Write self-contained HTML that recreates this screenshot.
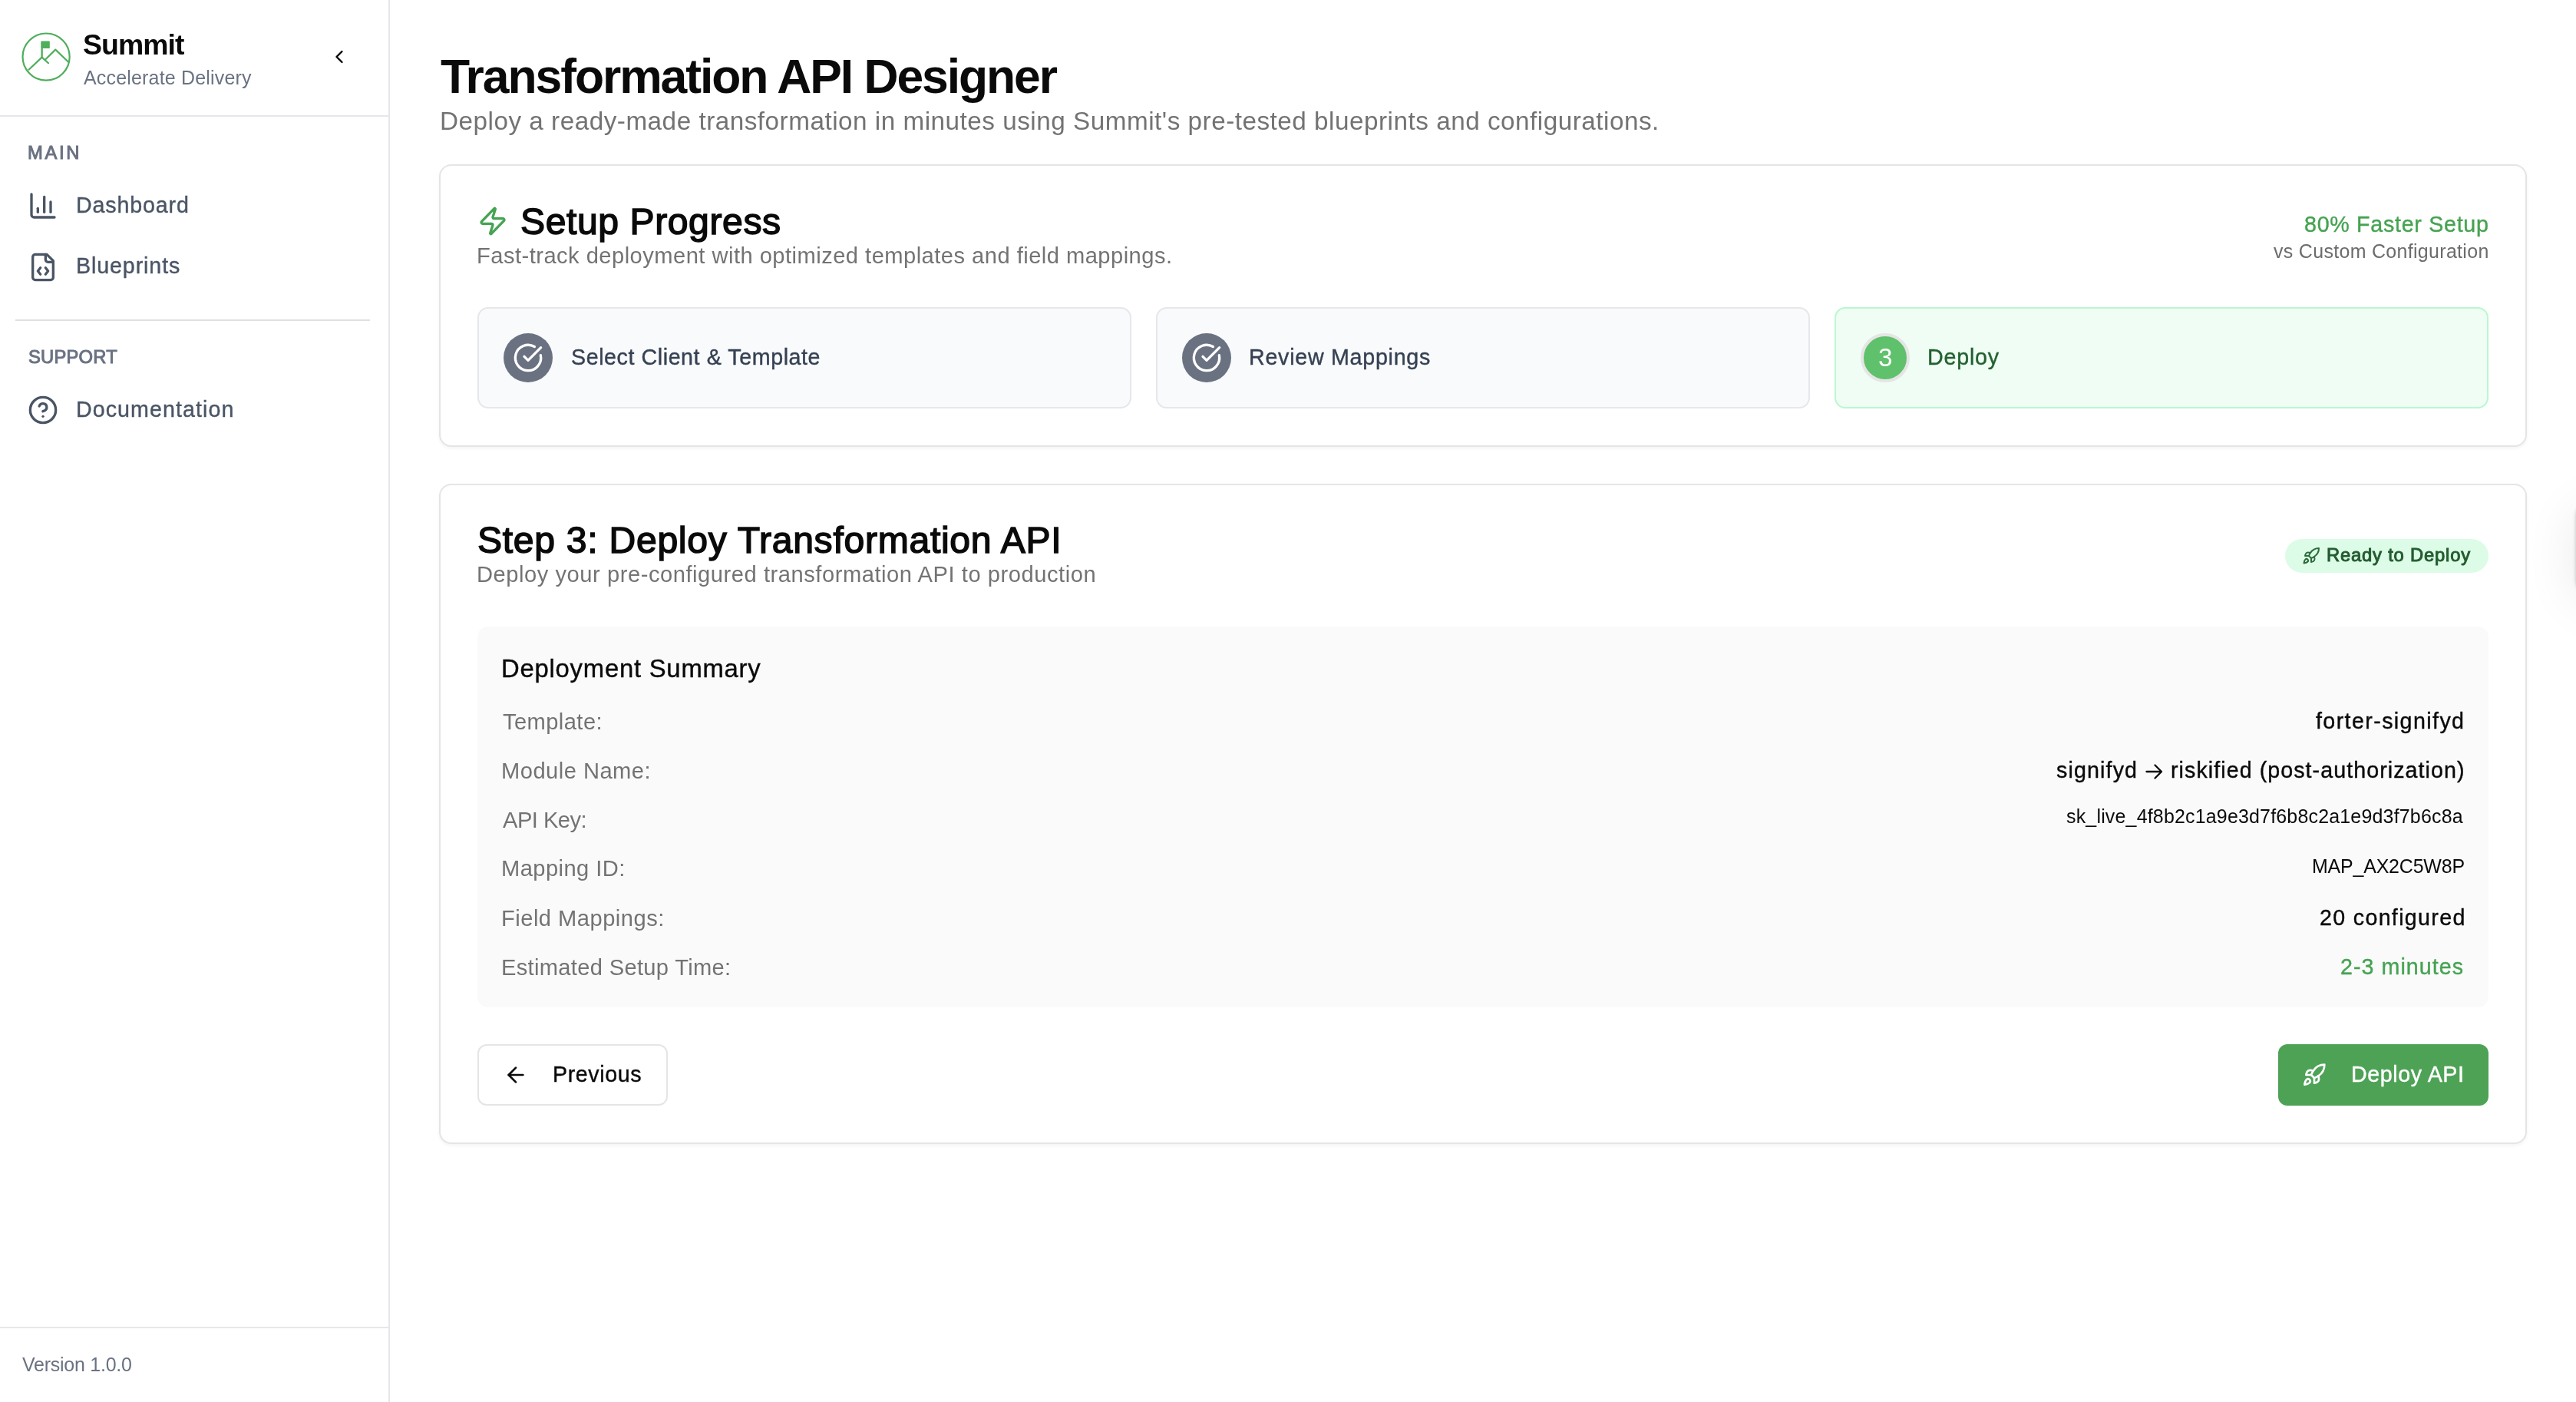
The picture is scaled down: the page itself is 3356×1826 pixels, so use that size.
<!DOCTYPE html>
<html><head><meta charset="utf-8"><title>Transformation API Designer</title>
<style>
html,body{margin:0;padding:0;width:3356px;height:1826px;overflow:hidden;background:#ffffff;font-family:"Liberation Sans",sans-serif;}
.a{position:absolute;box-sizing:border-box;}
.t{position:absolute;white-space:nowrap;font-family:"Liberation Sans",sans-serif;will-change:transform;}
svg.i{position:absolute;overflow:visible;fill:none;stroke-linecap:round;stroke-linejoin:round;}
</style></head><body>
<!-- ===== Sidebar ===== -->
<div class="a" style="left:0;top:0;width:508px;height:1826px;background:#ffffff;border-right:2px solid #e5e7eb"></div>
<div class="a" style="left:0;top:150px;width:506px;height:2px;background:#e5e7eb"></div>
<div class="a" style="left:20px;top:416px;width:462px;height:2px;background:#e0e0e0"></div>
<div class="a" style="left:0;top:1728px;width:506px;height:2px;background:#e5e7eb"></div>
<!-- logo -->
<svg class="i" style="left:0;top:0" width="120" height="140" viewBox="0 0 120 140" stroke="#4fae5b" stroke-width="2.2">
  <circle cx="60.1" cy="74.1" r="30.6"/>
  <path d="M37 91.2 L54.6 74.6" stroke-linecap="butt"/><path d="M54.6 74.6 L63 82.2" stroke-linecap="round"/>
  <path d="M59.6 77 L72.2 64.6 L89.4 81"/>
  <path d="M54.6 74.6 V54" stroke-width="2.4" stroke-linecap="butt"/>
  <rect x="53.6" y="53.4" width="11.2" height="9.6" fill="#4fae5b" stroke="none" rx="0.6"/>
</svg>
<!-- collapse chevron -->
<svg class="i" style="left:428px;top:60px" width="28" height="28" viewBox="0 0 24 24" stroke="#0a0a0a" stroke-width="2.1"><path d="m15 18-6-6 6-6"/></svg>
<!-- nav icons -->
<svg class="i" style="left:36px;top:248px" width="40" height="40" viewBox="0 0 24 24" stroke="#4a5565" stroke-width="2"><path d="M3 3v16a2 2 0 0 0 2 2h16"/><path d="M18 17V9"/><path d="M13 17V5"/><path d="M8 17v-3"/></svg>
<svg class="i" style="left:36px;top:328px" width="40" height="40" viewBox="0 0 24 24" stroke="#4a5565" stroke-width="2"><path d="M10 12.5 8 15l2 2.5"/><path d="m14 12.5 2 2.5-2 2.5"/><path d="M14 2v4a2 2 0 0 0 2 2h4"/><path d="M15 2H6a2 2 0 0 0-2 2v16a2 2 0 0 0 2 2h12a2 2 0 0 0 2-2V7z"/></svg>
<svg class="i" style="left:36px;top:514px" width="40" height="40" viewBox="0 0 24 24" stroke="#4a5565" stroke-width="2"><circle cx="12" cy="12" r="10"/><path d="M9.09 9a3 3 0 0 1 5.83 1c0 2-3 3-3 3"/><path d="M12 17h.01"/></svg>

<!-- ===== Card 1: Setup Progress ===== -->
<div class="a" style="left:572px;top:214px;width:2720px;height:368px;border:2px solid #e5e5e5;border-radius:16px;background:#fff;box-shadow:0 2px 4px rgba(0,0,0,0.05)"></div>
<svg class="i" style="left:622px;top:268px" width="40" height="40" viewBox="0 0 24 24" stroke="#46a352" stroke-width="2"><path d="M4 14a1 1 0 0 1-.78-1.63l9.9-10.2a.5.5 0 0 1 .86.46l-1.92 6.02A1 1 0 0 0 13 10h7a1 1 0 0 1 .78 1.63l-9.9 10.2a.5.5 0 0 1-.86-.46l1.92-6.02A1 1 0 0 0 11 14z"/></svg>
<!-- tiles -->
<div class="a" style="left:622px;top:400px;width:852px;height:132px;border:2px solid #e5e7eb;border-radius:14px;background:#f9fafb"></div>
<div class="a" style="left:1506px;top:400px;width:852px;height:132px;border:2px solid #e5e7eb;border-radius:14px;background:#f9fafb"></div>
<div class="a" style="left:2390px;top:400px;width:852px;height:132px;border:2px solid #b9f8cf;border-radius:14px;background:#f0fdf4"></div>
<div class="a" style="left:656px;top:434px;width:64px;height:64px;border-radius:50%;background:#6a7282"></div>
<svg class="i" style="left:668px;top:446px" width="40" height="40" viewBox="0 0 24 24" stroke="#ffffff" stroke-width="2"><path d="M21.801 10A10 10 0 1 1 17 3.335"/><path d="m9 11 3 3L22 4"/></svg>
<div class="a" style="left:1540px;top:434px;width:64px;height:64px;border-radius:50%;background:#6a7282"></div>
<svg class="i" style="left:1552px;top:446px" width="40" height="40" viewBox="0 0 24 24" stroke="#ffffff" stroke-width="2"><path d="M21.801 10A10 10 0 1 1 17 3.335"/><path d="m9 11 3 3L22 4"/></svg>
<div class="a" style="left:2424px;top:434px;width:64px;height:64px;border-radius:50%;background:#5fc16b;border:4px solid #e5e5e5"></div>

<!-- ===== Card 2: Step 3 ===== -->
<div class="a" style="left:572px;top:630px;width:2720px;height:860px;border:2px solid #e5e5e5;border-radius:16px;background:#fff;box-shadow:0 2px 4px rgba(0,0,0,0.05)"></div>
<div class="a" style="left:2977px;top:702px;width:265px;height:44px;border-radius:22px;background:#dcfce7"></div>
<svg class="i" style="left:2999px;top:712px" width="24" height="24" viewBox="0 0 24 24" stroke="#2b6b3a" stroke-width="2"><path d="M4.5 16.5c-1.5 1.26-2 5-2 5s3.74-.5 5-2c.71-.84.7-2.13-.09-2.91a2.18 2.18 0 0 0-2.91-.09z"/><path d="m12 15-3-3a22 22 0 0 1 2-3.95A12.88 12.88 0 0 1 22 2c0 2.72-.78 7.5-6 11a22.35 22.35 0 0 1-4 2z"/><path d="M9 12H4s.55-3.03 2-4c1.62-1.08 5 0 5 0"/><path d="M12 15v5s3.03-.55 4-2c1.08-1.62 0-5 0-5"/></svg>
<div class="a" style="left:622px;top:816px;width:2620px;height:496px;border-radius:14px;background:#fafafa"></div>
<!-- buttons -->
<div class="a" style="left:622px;top:1360px;width:248px;height:80px;border:2px solid #e5e5e5;border-radius:12px;background:#fff"></div>
<svg class="i" style="left:656px;top:1384px" width="32" height="32" viewBox="0 0 24 24" stroke="#0a0a0a" stroke-width="2"><path d="m12 19-7-7 7-7"/><path d="M19 12H5"/></svg>
<div class="a" style="left:2968px;top:1360px;width:274px;height:80px;border-radius:12px;background:#4ea255"></div>
<svg class="i" style="left:2999px;top:1384px" width="32" height="32" viewBox="0 0 24 24" stroke="#ffffff" stroke-width="2"><path d="M4.5 16.5c-1.5 1.26-2 5-2 5s3.74-.5 5-2c.71-.84.7-2.13-.09-2.91a2.18 2.18 0 0 0-2.91-.09z"/><path d="m12 15-3-3a22 22 0 0 1 2-3.95A12.88 12.88 0 0 1 22 2c0 2.72-.78 7.5-6 11a22.35 22.35 0 0 1-4 2z"/><path d="M9 12H4s.55-3.03 2-4c1.62-1.08 5 0 5 0"/><path d="M12 15v5s3.03-.55 4-2c1.08-1.62 0-5 0-5"/></svg>
<!-- offscreen floating element shadow at right edge -->
<div class="a" style="left:3356px;top:656px;width:120px;height:116px;border-radius:16px;background:#fff;box-shadow:0 10px 70px rgba(0,0,0,0.09), 0 0 5px rgba(0,0,0,0.22)"></div>
<svg class="i" style="left:0;top:0" width="3356" height="1826" viewBox="0 0 3356 1826" stroke="#0a0a0a" stroke-width="2.3" stroke-linecap="butt" stroke-linejoin="miter"><path d="M2796.5 1005 H2815"/><path d="M2807.5 996.5 L2816 1005 L2807.5 1013.5"/></svg>
<div class="t" style="left:108.00px;top:40.10px;font-size:37.44px;line-height:37.44px;font-weight:700;letter-spacing:-0.953px;color:#0a0a0a;">Summit</div>
<div class="t" style="left:109.00px;top:88.87px;font-size:24.96px;line-height:24.96px;font-weight:400;letter-spacing:0.196px;color:#6a7282;">Accelerate Delivery</div>
<div class="t" style="left:35.60px;top:187.28px;font-size:23.76px;line-height:23.76px;font-weight:400;letter-spacing:2.659px;color:#6a7282;-webkit-text-stroke:1.00px #6a7282;">MAIN</div>
<div class="t" style="left:99.00px;top:252.61px;font-size:28.64px;line-height:28.64px;font-weight:400;letter-spacing:0.860px;color:#4a5565;-webkit-text-stroke:0.40px #4a5565;">Dashboard</div>
<div class="t" style="left:99.00px;top:332.01px;font-size:28.64px;line-height:28.64px;font-weight:400;letter-spacing:0.891px;color:#4a5565;-webkit-text-stroke:0.40px #4a5565;">Blueprints</div>
<div class="t" style="left:36.80px;top:453.28px;font-size:23.76px;line-height:23.76px;font-weight:400;letter-spacing:0.222px;color:#6a7282;-webkit-text-stroke:1.00px #6a7282;">SUPPORT</div>
<div class="t" style="left:99.00px;top:518.61px;font-size:28.64px;line-height:28.64px;font-weight:400;letter-spacing:1.065px;color:#4a5565;-webkit-text-stroke:0.40px #4a5565;">Documentation</div>
<div class="t" style="left:29.00px;top:1764.87px;font-size:24.96px;line-height:24.96px;font-weight:400;letter-spacing:-0.232px;color:#6a7282;">Version 1.0.0</div>
<div class="t" style="left:574.00px;top:68.97px;font-size:62.4px;line-height:62.4px;font-weight:700;letter-spacing:-2.058px;color:#0a0a0a;">Transformation API Designer</div>
<div class="t" style="left:572.90px;top:140.82px;font-size:33.28px;line-height:33.28px;font-weight:400;letter-spacing:0.505px;color:#737373;">Deploy a ready-made transformation in minutes using Summit&#x27;s pre-tested blueprints and configurations.</div>
<div class="t" style="left:678.00px;top:263.96px;font-size:48.12px;line-height:48.12px;font-weight:400;letter-spacing:0.574px;color:#0a0a0a;-webkit-text-stroke:1.50px #0a0a0a;">Setup Progress</div>
<div class="t" style="left:621.00px;top:319.14px;font-size:29.12px;line-height:29.12px;font-weight:400;letter-spacing:0.473px;color:#737373;">Fast-track deployment with optimized templates and field mappings.</div>
<div class="t" style="left:3002.00px;top:277.51px;font-size:28.64px;line-height:28.64px;font-weight:400;letter-spacing:0.720px;color:#46a352;-webkit-text-stroke:0.40px #46a352;">80% Faster Setup</div>
<div class="t" style="left:2961.60px;top:314.67px;font-size:24.96px;line-height:24.96px;font-weight:400;letter-spacing:0.321px;color:#6b6b6b;">vs Custom Configuration</div>
<div class="t" style="left:744.20px;top:451.11px;font-size:28.64px;line-height:28.64px;font-weight:400;letter-spacing:0.573px;color:#364153;-webkit-text-stroke:0.40px #364153;">Select Client &amp; Template</div>
<div class="t" style="left:1627.00px;top:451.11px;font-size:28.64px;line-height:28.64px;font-weight:400;letter-spacing:0.742px;color:#364153;-webkit-text-stroke:0.40px #364153;">Review Mappings</div>
<div class="t" style="left:2510.80px;top:451.31px;font-size:28.64px;line-height:28.64px;font-weight:400;letter-spacing:0.802px;color:#236130;-webkit-text-stroke:0.40px #236130;">Deploy</div>
<div class="t" style="left:2446.80px;top:449.02px;font-size:33.28px;line-height:33.28px;font-weight:400;letter-spacing:0.000px;color:#ffffff;">3</div>
<div class="t" style="left:622.00px;top:679.46px;font-size:48.12px;line-height:48.12px;font-weight:400;letter-spacing:0.706px;color:#0a0a0a;-webkit-text-stroke:1.50px #0a0a0a;">Step 3: Deploy Transformation API</div>
<div class="t" style="left:621.00px;top:733.84px;font-size:29.12px;line-height:29.12px;font-weight:400;letter-spacing:0.544px;color:#737373;">Deploy your pre-configured transformation API to production</div>
<div class="t" style="left:3031.40px;top:711.38px;font-size:23.76px;line-height:23.76px;font-weight:400;letter-spacing:0.821px;color:#245c30;-webkit-text-stroke:1.00px #245c30;">Ready to Deploy</div>
<div class="t" style="left:653.00px;top:855.49px;font-size:32.8px;line-height:32.8px;font-weight:400;letter-spacing:0.781px;color:#0a0a0a;-webkit-text-stroke:0.40px #0a0a0a;">Deployment Summary</div>
<div class="t" style="left:655.00px;top:925.54px;font-size:29.12px;line-height:29.12px;font-weight:400;letter-spacing:0.423px;color:#737373;">Template:</div>
<div class="t" style="left:653.00px;top:989.74px;font-size:29.12px;line-height:29.12px;font-weight:400;letter-spacing:0.481px;color:#737373;">Module Name:</div>
<div class="t" style="left:655.00px;top:1053.54px;font-size:29.12px;line-height:29.12px;font-weight:400;letter-spacing:-0.524px;color:#737373;">API Key:</div>
<div class="t" style="left:653.00px;top:1116.54px;font-size:29.12px;line-height:29.12px;font-weight:400;letter-spacing:0.434px;color:#737373;">Mapping ID:</div>
<div class="t" style="left:653.00px;top:1181.54px;font-size:29.12px;line-height:29.12px;font-weight:400;letter-spacing:0.486px;color:#737373;">Field Mappings:</div>
<div class="t" style="left:653.00px;top:1245.64px;font-size:29.12px;line-height:29.12px;font-weight:400;letter-spacing:0.316px;color:#737373;">Estimated Setup Time:</div>
<div class="t" style="left:3016.90px;top:925.21px;font-size:28.64px;line-height:28.64px;font-weight:400;letter-spacing:1.401px;color:#0a0a0a;-webkit-text-stroke:0.40px #0a0a0a;">forter-signifyd</div>
<div class="t" style="left:2679.40px;top:989.31px;font-size:28.64px;line-height:28.64px;font-weight:400;letter-spacing:1.138px;color:#0a0a0a;-webkit-text-stroke:0.40px #0a0a0a;">signifyd</div>
<div class="t" style="left:2828.00px;top:989.31px;font-size:28.64px;line-height:28.64px;font-weight:400;letter-spacing:1.067px;color:#0a0a0a;-webkit-text-stroke:0.40px #0a0a0a;">riskified (post-authorization)</div>
<div class="t" style="left:2692.30px;top:1051.17px;font-size:24.96px;line-height:24.96px;font-weight:400;letter-spacing:0.189px;color:#0a0a0a;">sk_live_4f8b2c1a9e3d7f6b8c2a1e9d3f7b6c8a</div>
<div class="t" style="left:3011.60px;top:1115.57px;font-size:24.96px;line-height:24.96px;font-weight:400;letter-spacing:-0.186px;color:#0a0a0a;">MAP_AX2C5W8P</div>
<div class="t" style="left:3021.60px;top:1181.01px;font-size:28.64px;line-height:28.64px;font-weight:400;letter-spacing:1.321px;color:#0a0a0a;-webkit-text-stroke:0.40px #0a0a0a;">20 configured</div>
<div class="t" style="left:3049.30px;top:1244.61px;font-size:28.64px;line-height:28.64px;font-weight:400;letter-spacing:1.046px;color:#46a352;-webkit-text-stroke:0.40px #46a352;">2-3 minutes</div>
<div class="t" style="left:719.50px;top:1384.61px;font-size:28.64px;line-height:28.64px;font-weight:400;letter-spacing:0.606px;color:#0a0a0a;-webkit-text-stroke:0.40px #0a0a0a;">Previous</div>
<div class="t" style="left:3063.00px;top:1385.41px;font-size:28.64px;line-height:28.64px;font-weight:400;letter-spacing:0.595px;color:#ffffff;-webkit-text-stroke:0.40px #ffffff;">Deploy API</div>
<script>(function(){var w=window.innerWidth;if(w&&Math.abs(w-3356)>4){document.documentElement.style.zoom=(w/3356);}})();</script>
</body></html>
